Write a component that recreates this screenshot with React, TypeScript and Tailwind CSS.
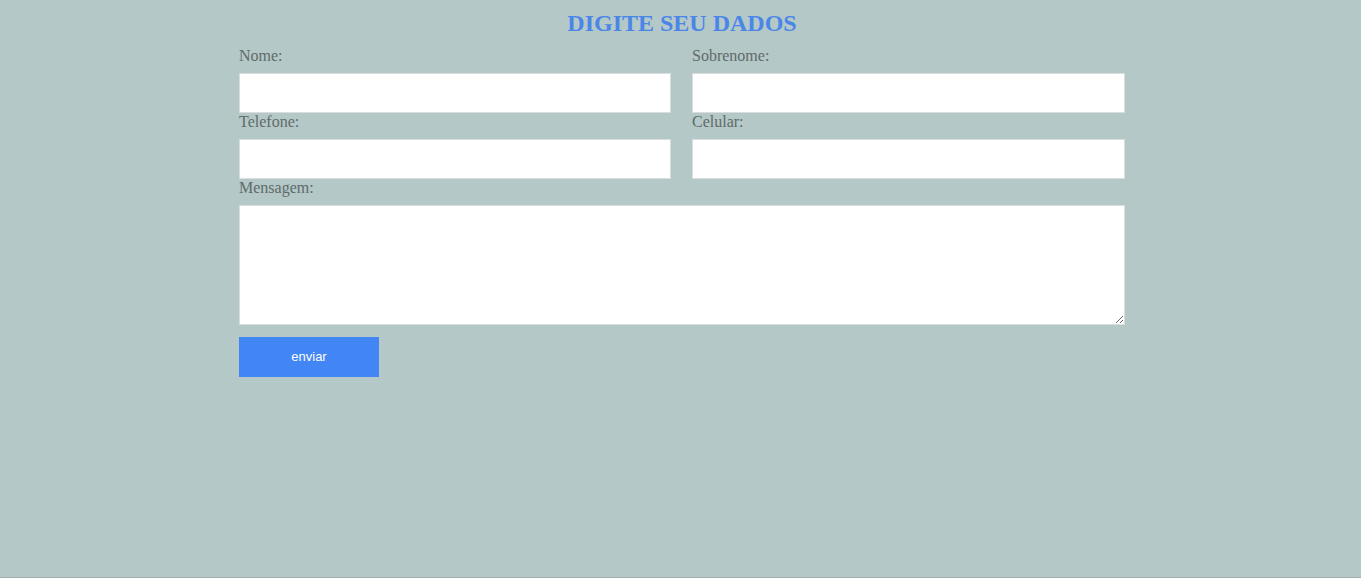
const FIELDS = [
  ["Nome:", "Sobrenome:"],
  ["Telefone:", "Celular:"],
] as const;

function Field({ label }: { label: string }) {
  return (
    <div className="flex flex-col">
      <label className="h-[26px] text-[16px] leading-[18px] text-[#616a6a]">{label}</label>
      <input
        type="text"
        className="h-[40px] w-full border border-[#d9dddd] bg-white px-2 outline-none"
      />
    </div>
  );
}

export default function App() {
  return (
    <main
      className="h-[578px] w-full border-b border-[#a3abab] bg-[#b4c8c8] pl-[3px]"
      style={{ fontFamily: '"Liberation Serif", "Times New Roman", serif' }}
    >
      <div className="mx-auto w-[886px]">
        <h1 className="h-[47px] pt-[8px] text-center text-[24px] font-bold leading-[30px] text-[#4a86e8]">
          DIGITE SEU DADOS
        </h1>
        {FIELDS.map((row) => (
          <div key={row[0]} className="grid grid-cols-[432px_433px] gap-x-[21px]">
            {row.map((label) => (
              <Field key={label} label={label} />
            ))}
          </div>
        ))}
        <div className="flex flex-col">
          <label className="h-[26px] text-[16px] leading-[18px] text-[#616a6a]">Mensagem:</label>
          <textarea className="h-[120px] w-full border border-[#d9dddd] bg-white p-2 outline-none" />
        </div>
        <button
          type="button"
          className="mt-[12px] h-[40px] w-[140px] bg-[#4285f4] text-[13px] text-white"
          style={{ fontFamily: '"Liberation Sans", Arial, sans-serif' }}
        >
          enviar
        </button>
      </div>
    </main>
  );
}
